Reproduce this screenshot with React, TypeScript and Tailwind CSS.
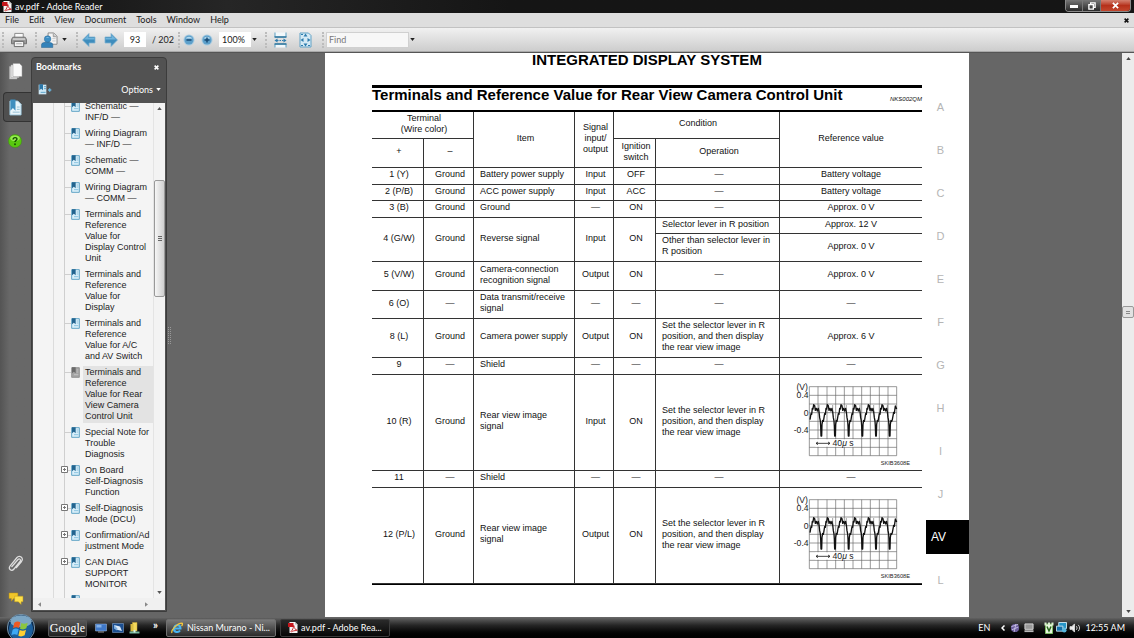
import React from "react";

type Bookmark = { lines: string[]; expandable?: boolean; selected?: boolean };

const bookmarks: Bookmark[] = [
  { lines: ["Schematic —", "INF/D —"] },
  { lines: ["Wiring Diagram", "— INF/D —"] },
  { lines: ["Schematic —", "COMM —"] },
  { lines: ["Wiring Diagram", "— COMM —"] },
  { lines: ["Terminals and", "Reference", "Value for", "Display Control", "Unit"] },
  { lines: ["Terminals and", "Reference", "Value for", "Display"] },
  { lines: ["Terminals and", "Reference", "Value for A/C", "and AV Switch"] },
  { lines: ["Terminals and", "Reference", "Value for Rear", "View Camera", "Control Unit"], selected: true },
  { lines: ["Special Note for", "Trouble", "Diagnosis"] },
  { lines: ["On Board", "Self-Diagnosis", "Function"], expandable: true },
  { lines: ["Self-Diagnosis", "Mode (DCU)"], expandable: true },
  { lines: ["Confirmation/Ad", "justment Mode"], expandable: true },
  { lines: ["CAN DIAG", "SUPPORT", "MONITOR"], expandable: true },
  { lines: ["", ""] },
];

const menus = ["File", "Edit", "View", "Document", "Tools", "Window", "Help"];

const sections = ["A", "B", "C", "D", "E", "F", "G", "H", "I", "J", "AV", "L"];

function Caret({ className = "" }: { className?: string }) {
  return (
    <svg viewBox="0 0 6 4" className={`h-[3px] w-[5px] shrink-0 ${className}`}>
      <path d="M0 0h6L3 4z" fill="currentColor" />
    </svg>
  );
}

function PdfIcon() {
  return (
    <svg viewBox="0 0 20 22" className="h-[11px] w-[10px] shrink-0">
      <path d="M3 0h11l5 5v17H3z" fill="#f5f5f5" />
      <path d="M14 0l5 5h-5z" fill="#bbb" />
      <path d="M0 2h11v8H0z" fill="#c4161c" />
      <path d="M6 19c3-3 5-7 5-11 0-2 1-1 1 0 0 4 3 8 6 8 1 0 1 1-1 1-4 0-8 1-10 3z" fill="none" stroke="#c4161c" strokeWidth="1.8" />
    </svg>
  );
}

function BookmarkIcon({ selected = false }: { selected?: boolean }) {
  return (
    <svg viewBox="0 0 27 33" className="h-[11px] w-[9px] shrink-0">
      <path d="M2 2h23v29H2z" fill={selected ? "#a5a5a5" : "#d9effa"} stroke={selected ? "#8a8a8a" : "#4795bd"} strokeWidth="2.5" />
      <path d="M3 1h11v18l-5.500-5L3 19z" fill={selected ? "#6a6a6a" : "#23648f"} />
      <path d="M17 9h5M17 15h5M9 23h13" stroke={selected ? "#c2c2c2" : "#8cc4e0"} strokeWidth="3" />
    </svg>
  );
}

function Grip() {
  return <div className="h-4 w-0 shrink-0 border-l-2 border-dotted border-[#bcbcbc]" />;
}

function TitleBar() {
  return (
    <header className="flex h-[13px] shrink-0 items-center bg-linear-to-r from-[#111] via-[#262626] via-20% to-[#151515] to-45% pl-[2px] text-white">
      <PdfIcon />
      <h1 className="ml-[3px] flex-1 text-[9px] leading-3">av.pdf - Adobe Reader</h1>
      <div className="mr-[3px] flex h-3 self-start overflow-hidden rounded-b-sm border border-t-0 border-[#8a8a8a]">
        <button aria-label="Minimize" className="flex w-[17px] items-center justify-center border-r border-[#777] bg-linear-to-b from-[#777] to-[#2b2b2b]">
          <span className="mt-px h-[3px] w-2 bg-white" />
        </button>
        <button aria-label="Restore" className="flex w-[18px] items-center justify-center border-r border-[#777] bg-linear-to-b from-[#777] to-[#2b2b2b]">
          <svg viewBox="0 0 9 9" className="h-2 w-2" fill="none" stroke="#fff" strokeWidth="1.500">
            <path d="M3 2.500V1h5v5H6.500M1 3h5v5H1z" />
          </svg>
        </button>
        <button aria-label="Close" className="flex w-[29px] items-center justify-center bg-linear-to-b from-[#d3806f] via-[#b5301a] to-[#c2462d]">
          <svg viewBox="0 0 8 8" className="h-[7px] w-[7px]" stroke="#fff" strokeWidth="2">
            <path d="M1 1l6 6M7 1L1 7" />
          </svg>
        </button>
      </div>
    </header>
  );
}

function MenuBar() {
  return (
    <nav className="flex h-[15px] shrink-0 items-center gap-[10px] border-b border-[#c2c2c2] bg-[#dedede] pl-[5px] text-[9px] leading-3 text-[#1a1a1a]">
      {menus.map((m) => (
        <button key={m}>{m}</button>
      ))}
      <button aria-label="Close document" className="mr-[5px] ml-auto">
        <svg viewBox="0 0 8 8" className="h-[5px] w-[5px]" stroke="#111" strokeWidth="2.500">
          <path d="M1 1l6 6M7 1L1 7" />
        </svg>
      </button>
    </nav>
  );
}

function ArrowIcon({ flip = false }: { flip?: boolean }) {
  return (
    <svg viewBox="0 0 28 28" className={`h-[14px] w-[14px] ${flip ? "-scale-x-100" : ""}`}>
      <path d="M1 14L14 1v7h12v12H14v7z" fill="#3f8dbd" stroke="#7fb2d0" strokeWidth="1.500" />
      <path d="M4 13L13 4v6h12v3z" fill="#6fb4dc" />
    </svg>
  );
}

function ZoomIcon({ plus = false }: { plus?: boolean }) {
  return (
    <svg viewBox="0 0 24 24" className="h-3 w-3">
      <circle cx="12" cy="12" r="11" fill="#a9cbe0" />
      <circle cx="12" cy="12" r="9" fill="#5c9fca" />
      <path d="M5 9a8 7 0 0 1 14 0z" fill="#b5daee" />
      <path d={plus ? "M7 12h10M12 7v10" : "M7 12h10"} stroke="#174a74" strokeWidth="3" />
    </svg>
  );
}

function Toolbar() {
  return (
    <div className="flex h-6 shrink-0 items-center border-b border-[#aaa] bg-linear-to-b from-[#f1f1f1] to-[#cdcdcd] pl-[2px] text-[9px] text-[#222]">
      <Grip />
      <button aria-label="Print" className="ml-[7px]">
        <svg viewBox="0 0 34 34" className="h-4 w-4">
          <path d="M8 3h18v10H8z" fill="#fafafa" stroke="#888" strokeWidth="2" />
          <path d="M4 11h26l3 5v9H1v-9z" fill="#9a9a9a" stroke="#6f6f6f" strokeWidth="2" />
          <path d="M4 15h26" stroke="#dadada" strokeWidth="3" />
          <path d="M7 20h20v11H7z" fill="#f2f2f2" stroke="#666" strokeWidth="2" />
          <path d="M11 25h12" stroke="#aaa" strokeWidth="2" />
        </svg>
      </button>
      <div className="ml-[8px]"><Grip /></div>
      <button aria-label="Collaborate" className="ml-1 flex items-center">
        <svg viewBox="0 0 36 34" className="h-4 w-[17px]">
          <path d="M15 2h12l7 7v17H15z" fill="#f4f4f4" stroke="#888" strokeWidth="2" />
          <path d="M26 3v7h7" fill="#ccc" stroke="#888" strokeWidth="1.500" />
          <path d="M24 14h7M24 19h7" stroke="#bbb" strokeWidth="1.500" />
          <circle cx="14" cy="15" r="7" fill="#3d8ec4" stroke="#296999" />
          <path d="M1 33v-6c0-4 5-5 12-5s12 1 12 5v6z" fill="#3482b9" stroke="#245f8b" />
          <path d="M10 12a5 4 0 0 1 8 0z" fill="#8cc6e8" />
        </svg>
        <Caret className="ml-1" />
      </button>
      <div className="ml-[9px]"><Grip /></div>
      <button aria-label="Previous page" className="ml-[4px]"><ArrowIcon /></button>
      <button aria-label="Next page" className="ml-2"><ArrowIcon flip /></button>
      <input aria-label="Page number" defaultValue="93" className="ml-[6px] h-[15px] w-[22px] bg-white text-center" />
      <span className="ml-[6px] w-[22px] whitespace-nowrap">/ 202</span>
      <div className="ml-1"><Grip /></div>
      <button aria-label="Zoom out" className="ml-[3px]"><ZoomIcon /></button>
      <button aria-label="Zoom in" className="ml-[6px]"><ZoomIcon plus /></button>
      <input aria-label="Zoom level" defaultValue="100%" className="ml-[6px] h-[15px] w-8 bg-white pl-[3px]" />
      <button aria-label="Zoom presets" className="ml-px"><Caret /></button>
      <div className="ml-2"><Grip /></div>
      <button aria-label="Fit width" className="ml-[7px]">
        <svg viewBox="0 0 26 32" className="h-4 w-[13px]">
          <path d="M2 1v9h22V1M2 31v-7h22v7" fill="#f2f8fb" stroke="#5b9fc2" strokeWidth="2" />
          <path d="M1 10h24M1 24h24" stroke="#34789f" strokeWidth="3" />
          <path d="M1 17l6-4v8zM25 17l-6-4v8z" fill="#2e7dae" />
          <path d="M6 17h14" stroke="#2e7dae" strokeWidth="2" strokeDasharray="3 2" />
        </svg>
      </button>
      <button aria-label="Fit page" className="ml-3">
        <svg viewBox="0 0 26 32" className="h-4 w-[13px]">
          <path d="M2 2h17l5 5v23H2z" fill="#d5eaf5" stroke="#62a3c6" strokeWidth="2" />
          <path d="M13 3l4 6H9zM13 29l4-6H9zM3 16l6-4v8zM23 16l-6-4v8z" fill="#2e7dae" />
          <path d="M4 5h4M4 27h4M18 27h4" stroke="#2e7dae" strokeWidth="2" />
        </svg>
      </button>
      <div className="ml-[10px]"><Grip /></div>
      <input aria-label="Find" placeholder="Find" className="ml-[2px] h-4 w-[83px] border border-[#d0d0d0] bg-[#f7f7f7] pl-[2px] placeholder:text-[#777]" />
      <button aria-label="Find options" className="ml-[1px]"><Caret /></button>
    </div>
  );
}

function Rail() {
  return (
    <aside className="flex w-[31px] shrink-0 flex-col bg-linear-to-r from-[#545454] to-[#686868] to-30% pt-[10px]">
      <button aria-label="Pages" className="ml-[9px] w-[14px]">
        <svg viewBox="0 0 28 34" className="h-[17px] w-[14px]">
          <path d="M1 7h15v25H1z" fill="#d5d5d5" stroke="#aaa" />
          <path d="M4 4h16v25H4z" fill="#e8e8e8" stroke="#aaa" />
          <path d="M8 1h13l5 5v21H8z" fill="#fafafa" stroke="#999" />
        </svg>
      </button>
      <button aria-label="Bookmarks" className="mt-3 ml-[3px] flex h-[30px] items-center rounded-l border border-r-0 border-[#333] bg-[#4f4f4f] pl-[5px]">
        <svg viewBox="0 0 28 36" className="h-[17px] w-[13px]">
          <path d="M2 4h17l7 7v23H2z" fill="#e9f5fb" stroke="#9cc9e0" strokeWidth="2" />
          <path d="M3 1h11v24l-5.500-6L3 25z" fill="#3f8fbf" />
          <path d="M17 17h6M17 22h6M8 28h15" stroke="#8fbdd4" strokeWidth="2" />
        </svg>
      </button>
      <button aria-label="Help" className="mt-3 ml-2 w-[14px]">
        <svg viewBox="0 0 30 30" className="h-[14px] w-[14px]">
          <circle cx="15" cy="15" r="14" fill="#58c80e" stroke="#3d8c0c" />
          <ellipse cx="15" cy="9" rx="10" ry="6" fill="#95ea50" />
          <path d="M11 12c0-6 9-5 8-1 0 3-4 3-4 6" fill="none" stroke="#124b00" strokeWidth="3" />
          <circle cx="15" cy="22" r="2" fill="#124b00" />
        </svg>
      </button>
      <button aria-label="Attachments" className="mt-auto ml-2 w-[15px]">
        <svg viewBox="0 0 30 36" className="h-[18px] w-[15px]" fill="none">
          <path d="M7 24L20 9c3-3 7 1 4 4L12 28c-5 6-12 0-8-6L18 5c5-6 14 1 9 8L16 26" stroke="#dedede" strokeWidth="2.500" />
        </svg>
      </button>
      <button aria-label="Comments" className="mt-[19px] mb-3 ml-2 w-4">
        <svg viewBox="0 0 34 28" className="h-[13px] w-4">
          <path d="M2 2h19v12h-9l-5 6v-6H2z" fill="#f1c62a" stroke="#b98d10" />
          <path d="M14 9h18v12h-4v6l-6-6h-8z" fill="#ffe14a" stroke="#c39a14" />
        </svg>
      </button>
    </aside>
  );
}

function BookmarkRow({ lines, expandable, selected }: Bookmark) {
  return (
    <li className="flex">
      <div className="w-[21px] shrink-0 border-r border-[#dcdcdc]" />
      <div className="relative w-[11px] shrink-0 border-r border-[#cfcfcf]">
        {expandable && (
          <button aria-label="Expand" className="absolute top-px -right-1 h-[7px] w-[7px] bg-white">
            <svg viewBox="0 0 7 7" className="h-[7px] w-[7px]" fill="none" stroke="#777">
              <path d="M.5.5h6v6h-6zM2 3.500h3M3.500 2v3" />
            </svg>
          </button>
        )}
      </div>
      <div className="mt-[5px] h-px w-[6px] shrink-0 bg-[#cfcfcf]" />
      <BookmarkIcon selected={selected} />
      <a
        href="#bookmark"
        className={`mb-[5px] ml-1 min-h-[22px] w-[68px] pl-px whitespace-nowrap ${selected ? "bg-[#e3e3e3] outline outline-[#e3e3e3]" : ""}`}
      >
        {lines.map((line, i) => (
          <span key={i} className="block">{line}</span>
        ))}
      </a>
    </li>
  );
}

function BookmarksPanel() {
  return (
    <section className="mt-1 mb-[5px] flex w-[136px] shrink-0 flex-col rounded-t border border-[#3c3c3c] bg-[#525252] px-px pb-px text-white">
      <div className="flex h-[18px] items-center pr-[6px] pl-[3px]">
        <h2 className="flex-1 text-[9px] font-bold">Bookmarks</h2>
        <button aria-label="Close bookmarks">
          <svg viewBox="0 0 8 8" className="h-[5px] w-[5px]" stroke="#fff" strokeWidth="2.500">
            <path d="M1 1l6 6M7 1L1 7" />
          </svg>
        </button>
      </div>
      <div className="flex h-[27px] items-center justify-between pr-[4px] pl-[5px]">
        <button aria-label="Expand current bookmark">
          <svg viewBox="0 0 42 33" className="h-[11px] w-[14px]">
            <path d="M2 2h23v29H2z" fill="#cfe8f5" />
            <path d="M4 1h11v18l-5.500-5L4 19z" fill="#2b77a8" />
            <path d="M18 8h6M18 14h6M8 25h15" stroke="#5ea5cb" strokeWidth="3" />
            <path d="M30 18h10M35 13v10" stroke="#69b2da" strokeWidth="4" />
          </svg>
        </button>
        <button className="flex items-center gap-[3px] text-[9px]">
          Options <Caret />
        </button>
      </div>
      <div className="flex min-h-0 flex-1 flex-col bg-[#f4f4f4] text-[#1c1c1c]">
        <div className="flex min-h-0 flex-1">
          <ul className="min-w-0 flex-1 overflow-hidden font-['Liberation_Sans',Arial,sans-serif] text-[9px] leading-[11px]">
            <li className="-mt-[2px]" />
            {bookmarks.map((b, i) => (
              <BookmarkRow key={i} {...b} />
            ))}
          </ul>
          <div className="flex w-3 shrink-0 flex-col items-center border-l border-[#e4e4e4] bg-[#f3f3f3] pt-1 pb-1 text-[#555]">
            <Caret className="rotate-180" />
            <div className="mt-[70px] flex h-[117px] w-full flex-col items-center justify-center gap-px rounded-xs border border-[#999] bg-linear-to-r from-[#f6f6f6] to-[#cfcfcf]">
              <span className="h-px w-1 bg-[#666]" />
              <span className="h-px w-1 bg-[#666]" />
              <span className="h-px w-1 bg-[#666]" />
            </div>
            <Caret className="mt-auto" />
          </div>
        </div>
        <div className="flex h-3 shrink-0 items-center justify-between bg-[#f0f0f0] pr-4 pl-1 text-[#888]">
          <Caret className="rotate-90" />
          <Caret className="-rotate-90" />
        </div>
      </div>
    </section>
  );
}

const pulse: [number, number][] = [
  [2, 146], [5, 128], [7, 130], [9, 112], [11, 114], [13, 101], [16, 104], [18, 118], [21, 112],
  [24, 120], [27, 112], [29, 122], [31, 140], [33, 150], [34, 165], [35, 195], [37, 195], [38, 160],
  [40, 148], [42, 151],
];
const wave =
  "M" +
  [0, 1, 2, 3, 4, 5].flatMap((k) => pulse.map(([x, y]) => `${88 + k * 41 + x} ${y}`)).join("L") +
  "L337 146L341 124L343 127L346 105L350 114";

function Waveform() {
  const cols = [88, 114, 141, 167, 193, 219, 245, 271, 298, 324, 350];
  const rows = [47, 73, 99, 125, 151, 177, 203, 229, 254];
  return (
    <svg viewBox="0 12 426 285" className="block h-[95px] w-[142px] font-['Liberation_Sans',Arial,sans-serif]">
      <g stroke="#666" strokeWidth="2">
        {cols.map((x) => <path key={x} d={`M${x} 47V254`} />)}
        {rows.map((y) => <path key={y} d={`M88 ${y}H350`} />)}
      </g>
      <path d="M106 205h116v22H106z" fill="#fff" />
      <path d="M108 217h42M114 213l-6 4 6 4M144 213l6 4-6 4" fill="none" stroke="#222" strokeWidth="2.500" />
      <path d={wave} fill="none" stroke="#111" strokeWidth="4" strokeLinejoin="round" />
      <path d="M117 102v20M158 102v20M199 102v20M240 102v20M281 102v20M322 102v20" stroke="#444" strokeWidth="1.500" />
      <g fill="#222" fontSize="26" textAnchor="end">
        <text x="84" y="56">(V)</text>
        <text x="86" y="82">0.4</text>
        <text x="86" y="135">0</text>
        <text x="86" y="186">-0.4</text>
        <text x="221" y="225">40<tspan fontStyle="italic">μ</tspan> s</text>
        <text x="390" y="281" fontSize="17">SKIB3608E</text>
      </g>
    </svg>
  );
}

type Row = {
  h: string;
  plus: string;
  minus: string;
  item: string;
  signal: string;
  ignition: string;
  operation: string;
  value?: string;
};

const D = "—";
const setLever = "Set the selector lever in R position, and then display the rear view image";

const topRows: Row[] = [
  { h: "h-[17px]", plus: "1 (Y)", minus: "Ground", item: "Battery power supply", signal: "Input", ignition: "OFF", operation: D, value: "Battery voltage" },
  { h: "h-4", plus: "2 (P/B)", minus: "Ground", item: "ACC power supply", signal: "Input", ignition: "ACC", operation: D, value: "Battery voltage" },
  { h: "h-[17px]", plus: "3 (B)", minus: "Ground", item: "Ground", signal: D, ignition: "ON", operation: D, value: "Approx. 0 V" },
];

const bottomRows: Row[] = [
  { h: "h-[29px]", plus: "5 (V/W)", minus: "Ground", item: "Camera-connection recognition signal", signal: "Output", ignition: "ON", operation: D, value: "Approx. 0 V" },
  { h: "h-7", plus: "6 (O)", minus: D, item: "Data transmit/receive signal", signal: D, ignition: D, operation: D, value: D },
  { h: "h-[39px]", plus: "8 (L)", minus: "Ground", item: "Camera power supply", signal: "Output", ignition: "ON", operation: setLever, value: "Approx. 6 V" },
  { h: "h-[17px]", plus: "9", minus: D, item: "Shield", signal: D, ignition: D, operation: D, value: D },
  { h: "h-24", plus: "10 (R)", minus: "Ground", item: "Rear view image signal", signal: "Input", ignition: "ON", operation: setLever },
  { h: "h-[17px]", plus: "11", minus: D, item: "Shield", signal: D, ignition: D, operation: D, value: D },
  { h: "h-24", plus: "12 (P/L)", minus: "Ground", item: "Rear view image signal", signal: "Output", ignition: "ON", operation: setLever },
];

const cell = "border-r border-b border-[#333] pt-0 pr-0 pb-[3px] pl-[3px] text-center font-normal";
const leftCell = "border-r border-b border-[#333] pt-0 pr-1 pb-[3px] pl-[6px] text-left";
const lastCell = "border-b border-[#333] px-0 pt-0 pb-[3px] text-center font-normal";
const chartCell = "border-b border-[#333] p-0";

function SignalRow({ r }: { r: Row }) {
  return (
    <tr className={r.h}>
      <td className={cell}>{r.plus}</td>
      <td className={cell}>{r.minus}</td>
      <td className={leftCell}>{r.item}</td>
      <td className={cell}>{r.signal}</td>
      <td className={cell}>{r.ignition}</td>
      <td className={r.operation === D ? cell : leftCell}>{r.operation}</td>
      <td className={r.value ? lastCell : chartCell}>{r.value ?? <Waveform />}</td>
    </tr>
  );
}

function TerminalTable() {
  return (
    <table className="w-full table-fixed border-separate border-spacing-0 border-t-2 border-b border-black text-[9px] leading-[11px]">
      <colgroup>
        <col className="w-[52px]" />
        <col className="w-[50px]" />
        <col className="w-[101px]" />
        <col className="w-[39px]" />
        <col className="w-[42px]" />
        <col className="w-[124px]" />
        <col />
      </colgroup>
      <thead>
        <tr className="h-[27px]">
          <th colSpan={2} className={cell}>Terminal<br />(Wire color)</th>
          <th rowSpan={2} className={cell}>Item</th>
          <th rowSpan={2} className={cell}>Signal<br />input/<br />output</th>
          <th colSpan={2} className={cell}>Condition</th>
          <th rowSpan={2} className={lastCell}>Reference value</th>
        </tr>
        <tr className="h-[29px]">
          <th className={cell}>+</th>
          <th className={cell}>–</th>
          <th className={cell}>Ignition<br />switch</th>
          <th className={cell}>Operation</th>
        </tr>
      </thead>
      <tbody>
        {topRows.map((r) => <SignalRow key={r.plus} r={r} />)}
        <tr className="h-4">
          <td rowSpan={2} className={cell}>4 (G/W)</td>
          <td rowSpan={2} className={cell}>Ground</td>
          <td rowSpan={2} className={leftCell}>Reverse signal</td>
          <td rowSpan={2} className={cell}>Input</td>
          <td rowSpan={2} className={cell}>ON</td>
          <td className={leftCell}>Selector lever in R position</td>
          <td className={lastCell}>Approx. 12 V</td>
        </tr>
        <tr className="h-7">
          <td className={leftCell}>Other than selector lever in R position</td>
          <td className={lastCell}>Approx. 0 V</td>
        </tr>
        {bottomRows.map((r) => <SignalRow key={r.plus} r={r} />)}
      </tbody>
    </table>
  );
}

function DocumentPage() {
  return (
    <main className="flex min-w-0 flex-1 justify-center overflow-hidden bg-[#666]">
      <article className="w-[644px] bg-white pl-[47px] font-['Liberation_Sans',Arial,sans-serif] text-[#111]">
        <div className="mr-[47px] text-center text-[15px] leading-[14px] font-bold text-black">INTEGRATED DISPLAY SYSTEM</div>
        <div className="mt-[18px] flex">
          <div className="w-[550px]">
            <div className="flex items-center justify-between border-t-[3px] border-black">
              <h2 className="pb-2 text-[15px] leading-[14px] font-bold text-black">
                Terminals and Reference Value for Rear View Camera Control Unit
              </h2>
              <span className="text-[6px] leading-3 italic">NKS002QM</span>
            </div>
            <TerminalTable />
          </div>
          <nav className="ml-auto w-[43px] text-[11px] text-[#b5b5b5]">
            {sections.map((s) =>
              s === "AV" ? (
                <div key={s} className="flex h-[43px] items-center">
                  <a href="#av" className="flex h-[34px] w-full items-center bg-black pl-[5px] text-xs text-white">{s}</a>
                </div>
              ) : (
                <a key={s} href="#section" className="flex h-[43px] w-[29px] items-center justify-center pt-[2px]">{s}</a>
              )
            )}
          </nav>
        </div>
      </article>
    </main>
  );
}

function Splitter() {
  return (
    <div className="flex w-[5px] shrink-0 items-center justify-center bg-[#666]">
      <div className="h-[17px] w-[3px] border-x border-dotted border-[#999]" />
    </div>
  );
}

function DocumentScrollbar() {
  return (
    <div className="flex w-3 shrink-0 flex-col items-center bg-[#ececec] py-1 text-[#444]">
      <Caret className="rotate-180" />
      <div className="mt-[246px] flex h-3 w-full flex-col items-center justify-center gap-px rounded-xs border border-[#999] bg-[#e2e2e2]">
        <span className="h-px w-1 bg-[#888]" />
        <span className="h-px w-1 bg-[#888]" />
      </div>
      <Caret className="mt-auto" />
    </div>
  );
}

function Taskbar() {
  return (
    <footer className="relative flex h-[21px] shrink-0 items-center bg-linear-to-b from-[#6a6a6a] via-[#252525] via-40% to-black text-[9px] text-white">
      <div className="w-12 shrink-0">
        <button aria-label="Start" className="absolute -top-[3px] left-[7px] h-6 w-7 overflow-hidden">
          <svg viewBox="0 0 84 84" className="h-7 w-7">
            <circle cx="42" cy="42" r="41" fill="#0c2a4c" stroke="#7c98ac" strokeWidth="3" />
            <circle cx="42" cy="45" r="36" fill="#1c5f9c" />
            <ellipse cx="42" cy="22" rx="32" ry="18" fill="#7ca6c4" />
            <path d="M22 26c7-5 13-4 18-1l-4 17c-6-3-12-3-18 1z" fill="#ee5a24" />
            <path d="M43 27c6 3 12 3 19-1l-4 17c-6 4-12 4-19 1z" fill="#8cc63f" />
            <path d="M17 47c6-4 12-4 18-1l-4 17c-6-3-12-3-18 1z" fill="#3fa9f5" />
            <path d="M38 48c7 3 13 3 19-1l-4 17c-7 4-13 4-19 1z" fill="#ffcf33" />
          </svg>
        </button>
      </div>
      <button className="h-[18px] w-[39px] rounded-xs border border-[#555] bg-linear-to-b from-[#5a5a5a] to-[#222] text-center font-['Liberation_Serif','Times_New_Roman',serif] text-xs leading-4">
        Google
      </button>
      <button aria-label="Show desktop" className="ml-2">
        <svg viewBox="0 0 24 20" className="h-[10px] w-3">
          <path d="M1 2h22v14H1z" fill="#3f78c8" stroke="#a8c2e0" />
          <path d="M3 4h10v5H3z" fill="#82b0e8" /><path d="M6 18h12" stroke="#999" strokeWidth="2" />
        </svg>
      </button>
      <button aria-label="Switch windows" className="ml-[5px]">
        <svg viewBox="0 0 24 20" className="h-[10px] w-3">
          <path d="M1 1h22v18H1z" fill="#1c4f91" stroke="#8fb3dc" />
          <path d="M4 4l12 3 4 9-12-3z" fill="#dce9f6" /><path d="M4 4l7 7-1 4-6-4z" fill="#7fb0e0" />
        </svg>
      </button>
      <button aria-label="Folder" className="ml-[5px]">
        <svg viewBox="0 0 22 24" className="h-3 w-[11px]">
          <path d="M7 1h9v17H7z" fill="#f4d95c" stroke="#c8a635" /><path d="M3 4h6v15H3z" fill="#dbbc40" />
          <path d="M1 19h20v4H1z" fill="#79b9a0" /><path d="M9 16h4v5H9z" fill="#d9f0e5" />
        </svg>
      </button>
      <button aria-label="More shortcuts" className="ml-3 w-[7px] pb-[6px] text-[11px] leading-3 font-bold">»</button>
      <button className="ml-[7px] flex h-[18px] w-[110px] items-center gap-1 rounded-xs border border-[#707070] bg-linear-to-b from-[#7a7a7a] to-[#2c2c2c] pl-1 whitespace-nowrap">
        <svg viewBox="0 0 24 24" className="h-3 w-3 shrink-0" fill="none">
          <path d="M6 13h13c0-9-12-9-13 0-1 8 9 9 12 4" stroke="#49b5f2" strokeWidth="4" />
          <path d="M2 22C-1 17 12 2 22 2c2 0 1 4-1 6" stroke="#f3c63b" strokeWidth="2.500" />
        </svg>
        Nissan Murano - Ni...
      </button>
      <button className="ml-1 flex h-[18px] w-[110px] items-center gap-[3px] rounded-xs border border-[#3c3c3c] bg-linear-to-b from-[#2a2a2a] to-[#080808] pl-[7px] whitespace-nowrap">
        <PdfIcon />
        av.pdf - Adobe Rea...
      </button>
      <div className="mr-[9px] ml-auto flex items-center">
        <span>EN</span>
        <svg viewBox="0 0 8 12" className="ml-[11px] h-[6px] w-1" fill="none" stroke="#fff" strokeWidth="3">
          <path d="M7 1L2 6l5 5" />
        </svg>
        <svg viewBox="0 0 22 22" className="ml-[5px] h-[10px] w-[10px]">
          <circle cx="11" cy="11" r="9" fill="#6c5d9c" />
          <path d="M3 8l15-5M4 15l14-6M9 20l4-18" stroke="#c7c0e5" strokeWidth="2" />
        </svg>
        <svg viewBox="0 0 22 22" className="ml-1 h-[10px] w-[10px]">
          <path d="M2 2h18v12H2z" fill="#999" stroke="#ddd" strokeWidth="2" />
          <path d="M1 18h20" stroke="#bbb" strokeWidth="4" />
        </svg>
        <svg viewBox="0 0 20 24" className="ml-[10px] h-3 w-[10px]">
          <path d="M3 4h14v19H3z" fill="#e8f5df" stroke="#7ebd62" strokeWidth="2" />
          <path d="M1 1h4v6H1zM8 1h4v5H8zM15 1h4v6h-4z" fill="#d9eed0" />
          <path d="M6 9l4 9 4-9" fill="none" stroke="#27651c" strokeWidth="3" />
        </svg>
        <svg viewBox="0 0 24 24" className="ml-[2px] h-[11px] w-[11px]">
          <path d="M6 1h17v13H6z" fill="#2795c8" stroke="#d5edf7" strokeWidth="2" />
          <path d="M1 9h14v11H1z" fill="#136fa8" stroke="#c8e4f2" strokeWidth="2" />
          <circle cx="18" cy="18" r="5" fill="#57b6dd" />
        </svg>
        <svg viewBox="0 0 24 22" className="ml-[2px] h-[10px] w-3" fill="none" stroke="#ddd" strokeWidth="2">
          <path d="M1 8h4l6-6v18l-6-6H1z" fill="#eee" />
          <path d="M15 7c2 2 2 6 0 8M19 4c4 4 4 10 0 14" />
        </svg>
        <time className="ml-[4px] whitespace-nowrap">12:55 AM</time>
      </div>
    </footer>
  );
}

export default function App() {
  return (
    <div className="flex h-screen flex-col overflow-hidden bg-[#666] font-[Lato,'Open_Sans',sans-serif]">
      <TitleBar />
      <MenuBar />
      <Toolbar />
      <div className="flex min-h-0 flex-1 border-t border-[#555]">
        <Rail />
        <BookmarksPanel />
        <Splitter />
        <DocumentPage />
        <DocumentScrollbar />
      </div>
      <Taskbar />
    </div>
  );
}
